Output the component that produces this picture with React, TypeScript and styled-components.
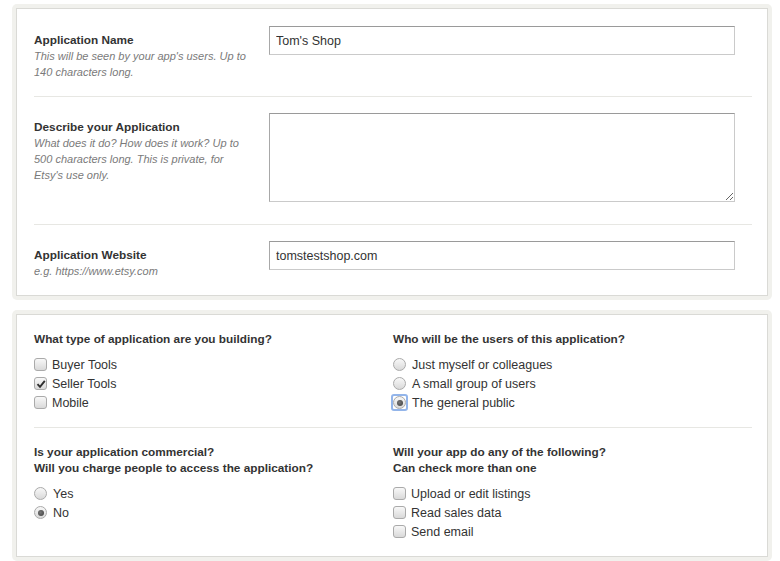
import React from "react";
import styled, { createGlobalStyle } from "styled-components";

const GlobalStyle = createGlobalStyle`
  body {
    margin: 0;
    background: #fff;
    font-family: "Liberation Sans", Arial, sans-serif;
    color: #333;
  }
`;

const Page = styled.div`
  padding: 4px 8px 0 12px;
  display: flex;
  flex-direction: column;
  gap: 10px;
`;

const Frame = styled.div`
  background: #f1f1ed;
  border-radius: 5px;
  padding: 4px;
`;

const Panel = styled.div<{ $first?: boolean }>`
  background: #fff;
  border: 1px solid #dadad6;
  padding: ${(p) => (p.$first ? "1px" : "0")} 15px 0 17px;
`;

const Row = styled.div`
  display: grid;
  grid-template-columns: 235px 466px;
  padding: 16px 0;
  & + & {
    border-top: 1px solid #e7e7e3;
  }
`;

const LabelCol = styled.div`
  padding-top: 6px;
`;

const Label = styled.div`
  font-size: 11.8px;
  font-weight: bold;
  line-height: 16px;
  color: #333;
`;

const Hint = styled.div`
  font-size: 11px;
  font-style: italic;
  line-height: 16px;
  color: #7a7a7a;
  max-width: 215px;
`;

const TextInput = styled.input`
  box-sizing: border-box;
  width: 100%;
  height: 29px;
  margin: 0 0 6px;
  padding: 0 6px;
  font-family: "Liberation Sans", Arial, sans-serif;
  font-size: 12.5px;
  color: #333;
  border: 1px solid #cacaca;
  border-top-color: #9a9a9a;
  border-left-color: #a8a8a8;
  border-radius: 0;
  outline: none;
`;

const TextArea = styled.textarea`
  box-sizing: border-box;
  width: 100%;
  height: 89px;
  margin: 0 0 6px;
  padding: 6px;
  display: block;
  font-family: "Liberation Sans", Arial, sans-serif;
  font-size: 12.5px;
  color: #333;
  border: 1px solid #cacaca;
  border-top-color: #9a9a9a;
  border-left-color: #a8a8a8;
  border-radius: 0;
  outline: none;
`;

const Section = styled.div`
  display: grid;
  grid-template-columns: 1fr 1fr;
  padding: 16px 0 15px;
  & + & {
    border-top: 1px solid #e7e7e3;
  }
`;

const Question = styled.div`
  font-size: 11.8px;
  font-weight: bold;
  line-height: 16px;
  color: #333;
  margin-bottom: 8px;
`;

const Option = styled.div`
  display: flex;
  align-items: center;
  height: 19px;
  font-size: 12.5px;
  color: #333;
`;

const Box = styled.span<{ $round?: boolean; $focus?: boolean }>`
  position: relative;
  box-sizing: border-box;
  width: 13px;
  height: 13px;
  margin-right: ${(p) => (p.$round ? "6px" : "5px")};
  border: 1px solid #aaaaaa;
  border-radius: ${(p) => (p.$round ? "50%" : "3px")};
  background: linear-gradient(#f8f8f8, #d9d9d9);
  display: flex;
  align-items: center;
  justify-content: center;
  flex-shrink: 0;
  &::after {
    content: "";
    display: ${(p) => (p.$focus ? "block" : "none")};
    position: absolute;
    inset: -3px;
    border: 2px solid #93b5ea;
    border-radius: 3px;
  }
`;

const Dot = styled.span`
  width: 6px;
  height: 6px;
  border-radius: 50%;
  background: radial-gradient(circle at 40% 40%, #777, #3c3c3c);
`;

const Check = () => (
  <svg width="10" height="10" viewBox="0 0 10 10">
    <path d="M1.5 5.2 L4 7.8 L8.8 1.8" fill="none" stroke="#2e2e2e" strokeWidth="1.9" />
  </svg>
);

interface ItemProps {
  kind: "check" | "radio";
  checked?: boolean;
  focus?: boolean;
  children: React.ReactNode;
}

const Item: React.FC<ItemProps> = ({ kind, checked, focus, children }) => (
  <Option>
    <Box $round={kind === "radio"} $focus={focus}>
      {checked && (kind === "radio" ? <Dot /> : <Check />)}
    </Box>
    {children}
  </Option>
);

const App: React.FC = () => {
  return (
    <>
      <GlobalStyle />
      <Page>
        <Frame>
          <Panel $first>
            <Row>
              <LabelCol>
                <Label>Application Name</Label>
                <Hint>This will be seen by your app's users. Up to 140 characters long.</Hint>
              </LabelCol>
              <div>
                <TextInput defaultValue="Tom's Shop" />
              </div>
            </Row>
            <Row>
              <LabelCol>
                <Label>Describe your Application</Label>
                <Hint>
                  What does it do? How does it work? Up to 500 characters long. This is private, for
                  Etsy's use only.
                </Hint>
              </LabelCol>
              <div>
                <TextArea />
              </div>
            </Row>
            <Row>
              <LabelCol>
                <Label>Application Website</Label>
                <Hint>e.g. https://www.etsy.com</Hint>
              </LabelCol>
              <div>
                <TextInput defaultValue="tomstestshop.com" />
              </div>
            </Row>
          </Panel>
        </Frame>
        <Frame>
          <Panel>
            <Section>
              <div>
                <Question>What type of application are you building?</Question>
                <Item kind="check">Buyer Tools</Item>
                <Item kind="check" checked>
                  Seller Tools
                </Item>
                <Item kind="check">Mobile</Item>
              </div>
              <div>
                <Question>Who will be the users of this application?</Question>
                <Item kind="radio">Just myself or colleagues</Item>
                <Item kind="radio">A small group of users</Item>
                <Item kind="radio" checked focus>
                  The general public
                </Item>
              </div>
            </Section>
            <Section>
              <div>
                <Question>
                  Is your application commercial?
                  <br />
                  Will you charge people to access the application?
                </Question>
                <Item kind="radio">Yes</Item>
                <Item kind="radio" checked>
                  No
                </Item>
              </div>
              <div>
                <Question>
                  Will your app do any of the following?
                  <br />
                  Can check more than one
                </Question>
                <Item kind="check">Upload or edit listings</Item>
                <Item kind="check">Read sales data</Item>
                <Item kind="check">Send email</Item>
              </div>
            </Section>
          </Panel>
        </Frame>
      </Page>
    </>
  );
};

export default App;
